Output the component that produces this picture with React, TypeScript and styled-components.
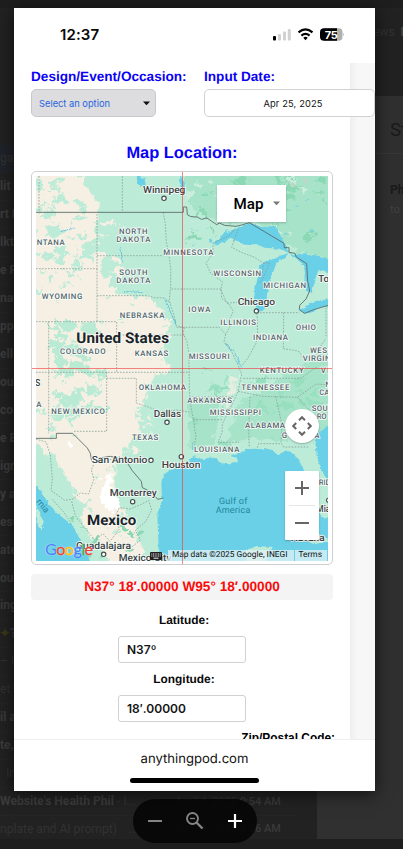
import React from 'react';
import styled, { createGlobalStyle } from 'styled-components';

const GlobalStyle = createGlobalStyle`
  * { box-sizing: border-box; }
  html, body { margin: 0; height: 100%; overflow: hidden; background: #202020; }
`;

const Screen = styled.div`
  position: relative;
  width: 403px;
  height: 849px;
  overflow: hidden;
  background: #202020;
  font-family: 'Liberation Sans', Arial, sans-serif;
`;

/* ---------- dimmed mail client ---------- */
const Mail = styled.div`
  display: grid;
  grid-template-columns: 317px 1fr;
  height: 849px;
  padding: 8px 0 10px;
  background: #1e1e1e;
  font-family: Roboto, sans-serif;
`;
const Rows = styled.div`
  background: #222;
  padding-top: 137px;
  overflow: hidden;
`;
const Row = styled.div<{ $bold?: boolean; $active?: boolean }>`
  display: flex;
  align-items: center;
  justify-content: space-between;
  height: 27.95px;
  width: 297px;
  padding-right: 16px;
  border-bottom: 1px solid #252525;
  background: ${(p) => (p.$active ? '#20232a' : 'transparent')};
  color: ${(p) => (p.$bold ? '#3c3c3c' : '#323232')};
  font-size: 12.1px;
  font-weight: ${(p) => (p.$bold ? 700 : 400)};
  white-space: nowrap;
`;
const Spark = styled.span`color: #3d3719;`;
const Light = styled.span`font-weight: 400; color: #343434;`;
const Stamp = styled.span`font-size: 11px; font-weight: 500; color: #303030;`;
const Late = styled.span`color: #3a3a3a;`;
const Reader = styled.div`
  display: grid;
  grid-template-rows: 88px 58px 1fr;
  background: #303030;
  overflow: hidden;
`;
const Tabs = styled.div`
  background: #222;
  padding: 17px 0 0 56px;
  color: #313131;
  font-size: 12px;
  white-space: nowrap;
  b { color: #444; }
`;
const Subject = styled.div`
  border-bottom: 1px solid #383838;
  padding: 22px 0 0 73px;
  font-size: 19px;
  color: #1a1a1a;
`;
const Sender = styled.div`
  padding: 27px 0 0 73px;
  color: #414141;
  font-size: 11px;
  line-height: 19px;
  b { color: #1b1b1b; font-size: 12px; }
`;

/* ---------- phone picture ---------- */
const Phone = styled.main`
  position: absolute;
  left: 14px;
  top: 8px;
  width: 361px;
  height: 783px;
  display: flex;
  flex-direction: column;
  background: #fff;
  box-shadow: 0 3px 16px rgba(0, 0, 0, 0.65);
`;
const Status = styled.header`
  height: 55px;
  display: flex;
  flex: none;
  justify-content: space-between;
  padding: 18px 30px 0 46px;
`;
const Clock = styled.span`
  font: 600 15px/18px Inter, sans-serif;
  letter-spacing: 0.1px;
  color: #080808;
`;
const Body = styled.section`
  flex: 1;
  min-height: 0;
  overflow: hidden;
  padding: 5px 0 0 17px;
  background: linear-gradient(90deg, #fff 0 336px, #eeeeee 336px, #f7f7f7 343px);
`;
const Fields = styled.div`
  display: grid;
  grid-template-columns: 173px 171px;
`;
const FieldLabel = styled.label`
  display: block;
  height: 21px;
  font-size: 13.6px;
  line-height: 17px;
  font-weight: 700;
  color: #0b02f5;
  white-space: nowrap;
  text-rendering: geometricPrecision;
`;
const SelectBox = styled.div`
  display: flex;
  align-items: center;
  justify-content: space-between;
  width: 125px;
  height: 28px;
  padding: 0 5px 0 7px;
  border: 1px solid #c9c9cb;
  border-radius: 5px;
  background: #dddde0;
  color: #2864dc;
  font: 400 9.3px Inter, sans-serif;
`;
const DateBox = styled.div`
  width: 171px;
  height: 28px;
  padding-left: 7px;
  border: 1px solid #d2d2d2;
  border-radius: 5px;
  background: #fff;
  color: #111;
  font: 400 9.3px/27px Inter, sans-serif;
  letter-spacing: 0.15px;
  text-align: center;
`;
const Center = styled.div`
  width: 302px;
  display: flex;
  flex-direction: column;
  align-items: center;
`;
const Title = styled.h2`
  margin: 26px 0 8px;
  font-size: 16.4px;
  line-height: 20px;
  color: #0b02f5;
  text-rendering: geometricPrecision;
`;
const MapFrame = styled.div`
  position: relative;
  width: 302px;
  height: 394px;
  padding: 4px;
  border: 1px solid #cfcfcf;
  border-radius: 5px;
`;
const MapView = styled.div`
  position: relative;
  width: 292px;
  height: 385px;
  overflow: hidden;
  > svg { display: block; }
`;
const CrossLine = styled.i<{ $vertical?: boolean }>`
  position: absolute;
  background: rgba(240, 60, 60, 0.62);
  ${(p) => (p.$vertical ? 'left: 150px; top: 0; bottom: 0; width: 1px;' : 'top: 196px; left: 0; right: 0; height: 1px;')}
`;
const MapType = styled.div`
  position: absolute;
  left: 181px;
  top: 9px;
  width: 69px;
  height: 37px;
  display: flex;
  align-items: center;
  justify-content: space-between;
  padding: 0 6px 0 16.5px;
  background: #fff;
  box-shadow: 0 1px 2px rgba(0, 0, 0, 0.2);
  font: 500 15.2px Roboto, sans-serif;
  color: #000;
`;
const PanButton = styled.div`
  position: absolute;
  left: 249px;
  top: 233px;
  width: 34px;
  height: 34px;
  border-radius: 50%;
  background: #fff;
  box-shadow: 0 1px 2px rgba(0, 0, 0, 0.25);
  svg { display: block; }
`;
const ZoomStack = styled.div`
  position: absolute;
  left: 249px;
  top: 295px;
  width: 34px;
  height: 69px;
  border-radius: 1px;
  background: #fff;
  box-shadow: 0 1px 2px rgba(0, 0, 0, 0.25);
  svg { display: block; }
`;
const Credits = styled.div`
  position: absolute;
  right: 1px;
  bottom: 0;
  height: 11px;
  display: flex;
  align-items: center;
  font: 400 8.35px/11px Roboto, sans-serif;
  color: #111;
  white-space: nowrap;
  text-rendering: geometricPrecision;
  svg { margin-right: 6px; }
  span { background: rgba(226, 242, 246, 0.76); padding: 0 6px 0 4px; }
  span + span { margin-left: 1px; padding: 0 5px 0 4px; }
`;
const GoogleMark = styled.div`
  position: absolute;
  left: 9px;
  bottom: 2px;
  font: 400 16px/20px Lato, sans-serif;
  letter-spacing: -0.45px;
  -webkit-text-stroke: 0.35px currentColor;
  text-shadow: 0 0 1px #fff, 0 0 1px #fff;
`;
const Tint = styled.span<{ $c: string }>`color: ${(p) => p.$c};`;
const Coordinates = styled.output`
  display: block;
  width: 302px;
  height: 26px;
  margin-top: 9px;
  border-radius: 4px;
  background: #f4f4f4;
  color: #fa0b0b;
  font: 700 13.65px/25px 'Liberation Sans', Arial, sans-serif;
  text-align: center;
  text-rendering: geometricPrecision;
`;
const SmallLabel = styled.label<{ $top: number }>`
  height: 16px;
  margin: ${(p) => p.$top}px 0 8px 4px;
  font-size: 11.9px;
  line-height: 16px;
  font-weight: 700;
  color: #090909;
  text-rendering: geometricPrecision;
`;
const ValueBox = styled.div`
  width: 128px;
  height: 27px;
  padding-left: 8px;
  border: 1px solid #d1d1d1;
  border-radius: 3px;
  font: 600 12px/26px Inter, sans-serif;
  color: #151515;
`;
const ZipLabel = styled.div`
  align-self: flex-end;
  margin: 8px -2px 0 0;
  font-size: 11.9px;
  line-height: 16px;
  font-weight: 700;
`;
const AddressBar = styled.footer`
  flex: none;
  height: 52px;
  border-top: 1px solid #efefef;
  display: flex;
  flex-direction: column;
  align-items: center;
  justify-content: space-between;
  padding: 9px 0 8px;
  font: 400 13.1px/20px Inter, sans-serif;
  color: #111;
  text-rendering: geometricPrecision;
`;
const HomeBar = styled.i`width: 129px; height: 5px; border-radius: 3px; background: #000;`;

const Pill = styled.nav`
  position: absolute;
  left: 133px;
  top: 799px;
  width: 124px;
  height: 44px;
  border-radius: 22px;
  background: rgba(4, 4, 4, 0.88);
  svg { display: block; }
`;

/* ---------- map drawing ---------- */
function scatter(seed: number, count: number, x: number, y: number, w: number, h: number, size: number) {
  let s = seed;
  const next = () => {
    s = (s * 16807) % 2147483647;
    return s / 2147483647;
  };
  let d = '';
  for (let i = 0; i < count; i++) {
    const cx = x + next() * w;
    const cy = y + next() * h;
    const r = size * (0.3 + next());
    const turn = next() * 6;
    for (let k = 0; k < 9; k++) {
      const a = turn + (k / 9) * Math.PI * 2;
      const q = r * (0.4 + next() * 0.9);
      d += `${k ? 'L' : 'M'}${(cx + Math.cos(a) * q * 1.25).toFixed(1)} ${(cy + Math.sin(a) * q * 0.8).toFixed(1)}`;
    }
    d += 'Z';
  }
  return d;
}

type Label = [string, number, number, number];
const states: Label[] = [
  ['NTANA', 50, 239, 84], ['NORTH', 297, 206, 86], ['DAKOTA', 289, 230, 102], ['MINNESOTA', 430, 269, 150],
  ['SOUTH', 298, 328, 85], ['DAKOTA', 289, 352, 102], ['WISCONSIN', 580, 331, 143], ['MICHIGAN', 730, 368, 128],
  ['WYOMING', 65, 400, 122], ['IOWA', 505, 440, 66], ['NEBRASKA', 299, 459, 134], ['ILLINOIS', 601, 478, 107],
  ['OHIO', 827, 493, 61], ['INDIANA', 699, 523, 105], ['COLORADO', 120, 567, 137], ['KANSAS', 344, 573, 101],
  ['MISSOURI', 506, 581, 123], ['WES', 870, 562, 51], ['VIRGIN', 848, 586, 84], ['KENTUCKY', 719, 623, 132],
  ['VI', 902, 623, 26], ['OKLAHOMA', 356, 675, 142], ['TENNESSEE', 664, 675, 144], ['N', 916, 666, 16],
  ['CA', 898, 690, 30], ['ARKANSAS', 502, 712, 134], ['A', 49, 725, 14], ['NEW MEXICO', 94, 747, 161],
  ['MISSISSIPPI', 569, 748, 154], ['SOU', 875, 738, 48], ['RO', 890, 761, 30], ['ALABAMA', 675, 787, 120],
  ['G', 785, 818, 16], ['A', 883, 818, 14], ['TEXAS', 336, 823, 79], ['LOUISIANA', 522, 860, 136],
  ['RID', 896, 960, 36],
];
const cities: Label[] = [
  ['Winnipeg', 369, 85, 127], ['Chicago', 653, 421, 112], ['Dallas', 401, 756, 82], ['San Antonio', 215, 895, 167],
  ['Houston', 425, 910, 116], ['Monterrey', 269, 994, 141], ['Guadalajara', 168, 1152, 165],
  ['Mexico City', 296, 1187, 158], ['Havana', 812, 1128, 102], ['Mia', 889, 1042, 42], ['S', 46, 662, 15], ['To', 895, 352, 32],
];
const rings = [[432, 100], [709, 438], [441, 772], [393, 886], [484, 875], [338, 1010], [251, 1168], [926, 1006]];

const gulf =
  'M418 1200L414 1100L412 1050L426 1002L424 954L432 928L458 911L494 899L520 873L551 883L571 877L588 880L596 894L625 897L640 892L657 892L649 878L628 872L665 861L685 852L705 851L721 853L733 849L755 855L772 867L793 861L809 858L820 868L840 887L848 906L856 930L855 960L862 982L876 1009L891 1039L915 1062L940 1050L940 1200Z';
const pacific = 'M44 958L65 980L86 1017L122 1053L156 1080L177 1117L200 1164L213 1196L44 1196Z';
const atlantic = 'M930 778L894 805L885 826L890 869L901 908L922 945L935 950Z';
const baja = 'M44 1009L56 1040L72 1068L65 1096L53 1082L50 1054L44 1044Z';
const superior =
  'M579 239L612 204L657 188L690 174L727 187L766 182L780 210L800 245L807 263L777 251L734 248L709 237L674 240L654 229L630 219L607 235Z';
const lakeMichigan =
  'M728 293L747 283L759 286L780 272L806 264L791 281L777 284L767 303L756 325L747 352L741 389L737 429L720 442L708 431L701 407L705 373L713 338L727 316L716 305Z';
const huron =
  'M807 263L829 270L852 264L881 270L908 276L932 285L932 327L908 315L890 322L884 355L873 385L858 377L853 350L855 319L846 293L827 282Z';
const erie = 'M837 435L862 423L882 408L930 402L930 424L902 427L872 443L852 446Z';

const dotted = [
  'M57 33V142M307 33V140M48 311H231V142M231 272H443M231 392H382L402 398L433 399L451 414',
  'M430 142L436 177L439 230L447 271L452 310V372H603M451 374L448 408L461 448L469 482L493 488L489 505L501 530L506 560L509 695',
  'M231 311V470M48 470H290V622M290 510H494M86 470V805M48 622H509M260 622V799L160 799M260 640H349V714L390 728L425 741L471 735L508 741',
  'M470 487H598L617 508L632 481L629 462L640 439L626 416L605 400L603 374L607 350L572 325L558 294L579 265V234L630 211L645 190M654 193L635 247L666 263L702 276L730 294L725 340',
  'M617 508L612 531L636 562L654 600L665 627L654 680L629 733L607 776L606 803L594 832H657M508 695H640M520 764H608M508 695L519 760L528 815L522 848',
  'M711 445L713 508L708 535L683 580L664 604M711 443H838M791 443L790 551L835 558L852 582L890 570L905 538L918 520M918 428V518M670 640H842L892 605M655 679L726 694L832 697L888 657L930 660',
  'M690 695L686 789L688 848M767 694L786 779L783 832L791 846L867 846M712 848L716 836H780M832 697L866 733L893 763M730 294L749 294L729 343L713 356',
  'M603 374L621 415L651 412M48 822L78 831L91 870L97 941L93 976L134 1006L159 1002L181 984L206 987L222 942L214 915L225 888L245 884L264 886L303 874',
  'M155 1009L166 1052L198 1093L224 1126L249 1106L270 1129L299 1091L281 1064L298 1028L331 1032L366 1017L386 1006L395 1035L377 1070L346 1096L361 1125L331 1150M97 1003L130 1040L154 1075',
];
const borders =
  'M48 142H490V126H500L502 149L513 155L532 156L544 163L561 159L574 168L590 179L598 174L614 181L648 184L665 180L688 173L792 235L793 248L807 248L807 262L825 265L829 276L860 296L863 348L869 378L858 402L839 421L838 434L854 445L881 434L928 420M48 820H109V805H158L202 849L211 865L215 888L239 879L271 874L316 884L336 916L364 949L367 968L396 982L413 1003L430 999';

const MapArt = () => (
  <svg width="292" height="385" viewBox="48 33 876 1155" textRendering="geometricPrecision">
    <defs>
      <filter id="rough" x="-5%" y="-5%" width="110%" height="110%" colorInterpolationFilters="sRGB">
        <feTurbulence type="fractalNoise" baseFrequency="0.045" numOctaves="3" seed="8" />
        <feDisplacementMap in="SourceGraphic" scale="42" xChannelSelector="R" yChannelSelector="G" />
      </filter>
      <filter id="coast" colorInterpolationFilters="sRGB">
        <feTurbulence type="fractalNoise" baseFrequency="0.08" numOctaves="2" seed="4" />
        <feDisplacementMap in="SourceGraphic" scale="12" xChannelSelector="R" yChannelSelector="G" />
      </filter>
    </defs>
    <rect x="48" y="33" width="876" height="1155" fill="#bcebd7" />
    <g filter="url(#rough)">
      <path fill="#a6e3c8" d="M500 0H960V290L835 260L780 225L680 165L600 175L500 115ZM650 720L760 650L850 600L950 540V790L850 805L790 830L690 820L620 840ZM500 710L600 690L580 850L510 850Z" />
      <path fill="#8bd9b4" d={scatter(91, 30, 520, 40, 400, 180, 17)} />
      <path fill="#98dfbf" d={scatter(51, 28, 520, 610, 380, 230, 16)} />
      <path fill="#cceedd" d={scatter(17, 25, 510, 40, 400, 200, 12)} />
      <path fill="#f5f0e3" d="M0 0H170L205 80L240 120L230 150L220 240L250 330L290 385L390 400L445 460L450 500L430 560L455 620L405 625L370 700L350 750L365 800L310 850L280 950L300 1040L250 1080L230 1000L180 1010L140 940L100 870L0 815Z" />
      <path fill="#f5f0e3" d="M220 985L300 1020L340 1090L400 1220H290L220 1120L180 1060Z" />
      <path fill="#bcebd7" d={scatter(35, 52, 40, 40, 190, 270, 15)} />
      <path fill="#bcebd7" d={scatter(77, 14, 48, 315, 150, 130, 9)} />
      <path fill="#b9ead4" d={scatter(61, 65, 105, 465, 145, 290, 15)} />
      <path fill="#bcebd7" d={scatter(23, 14, 45, 735, 130, 80, 11)} />
      <path fill="#f5f0e3" d={scatter(49, 20, 235, 165, 85, 240, 13)} />
      <path fill="#bcebd7" d={scatter(29, 25, 260, 350, 180, 250, 6)} />
      <path fill="#bcebd7" d={scatter(19, 32, 210, 895, 180, 280, 9)} />
      <path fill="#f5f0e3" d={scatter(44, 25, 310, 665, 95, 220, 9)} />
      <path fill="#fff" d="M255 925L275 930L273 975L290 990L308 1010L285 1038L252 1028L240 1000ZM144 815L165 850L142 845Z" />
      <path fill="#e6efdf" d="M638 630L655 632L641 675L620 730L608 735L620 690Z" />
      <path fill="#8bd9b4" d={scatter(83, 16, 155, 1050, 240, 130, 9)} />
      <path fill="#c3d6c8" d={scatter(88, 7, 765, 35, 100, 55, 8)} />
    </g>
    <g filter="url(#coast)" fill="#6ad0e7">
      <path d={gulf} />
      <path d={pacific} />
      <path d={atlantic} />
      <path d={superior} />
      <path d={lakeMichigan} />
      <path d={huron} />
      <path d={erie} />
      <path d="M350 35L373 38L378 63L355 62ZM481 33L495 55L490 84L480 60Z" />
      <path d={scatter(31, 22, 490, 70, 400, 190, 4)} />
      <path fill="#bcebd7" d={baja} />
      <path fill="#bcebd7" d="M678 1155L710 1143L755 1145L738 1190H680ZM808 1115L840 1097L905 1108L928 1126L885 1138Z" />
    </g>
    <g fill="none" stroke="#4cbbe1" strokeWidth="2.3" filter="url(#coast)">
      <path d="M122 200L142 195L153 188L163 190M435 402L449 435L468 480M620 535L650 575L665 610M518 852L520 832M315 380L365 382M308 290L302 246" />
    </g>
    {dotted.map((d) => (
      <path key={d} d={d} fill="none" stroke="#829b94" strokeWidth="2.2" strokeDasharray="5 4" />
    ))}
    <path d={borders} fill="none" stroke="#5a6868" strokeWidth="2.6" strokeLinejoin="round" />
    {rings.map(([x, y]) => (
      <circle key={`${x}-${y}`} cx={x} cy={y} r="6.5" fill="#fff" stroke="#454b4d" strokeWidth="3.5" />
    ))}
    <g fontFamily="Roboto, sans-serif" paintOrder="stroke" stroke="#f5fcf8" strokeLinejoin="round">
      {states.map(([text, x, y, w], i) => (
        <text key={i} x={x} y={y + 1} fontSize="23.5" fontWeight="500" textLength={w} strokeWidth="5" fill="#56636a">{text}</text>
      ))}
      {cities.map(([text, x, y, w], i) => (
        <text key={i} x={x} y={y} fontSize="29.5" fontWeight="500" textLength={w} lengthAdjust="spacingAndGlyphs" strokeWidth="5" fill="#3b4144">{text}</text>
      ))}
      <text x="169" y="534" fontSize="44.5" fontWeight="700" textLength="278" lengthAdjust="spacingAndGlyphs" strokeWidth="5" fill="#1d2225">United States</text>
      <text x="201" y="1081" fontSize="43" fontWeight="700" textLength="148" lengthAdjust="spacingAndGlyphs" strokeWidth="5" fill="#1d2225">Mexico</text>
    </g>
    <g fontFamily="Roboto, sans-serif" fontSize="27" fill="#24879d">
      <text x="597" y="1017" textLength="85">Gulf of</text>
      <text x="587" y="1044" textLength="104">America</text>
      <text x="47" y="1011" transform="rotate(49 47 1011)">rnia</text>
    </g>
  </svg>
);

const Caret = ({ color }: { color: string }) => (
  <svg width="7" height="5" viewBox="0 0 7 5"><path d="M0 .5h7L3.5 4.3z" fill={color} /></svg>
);

const StatusIcons = () => (
  <svg width="74" height="18" viewBox="0 0 74 18">
    <rect x="2" y="10" width="3" height="4.5" rx=".9" fill="#000" />
    <g fill="#d1d1d1">
      <rect x="7" y="8" width="3" height="6.5" rx=".9" />
      <rect x="12" y="5.5" width="3" height="9" rx=".9" />
      <rect x="16.8" y="3" width="3" height="11.5" rx=".9" />
    </g>
    <g fill="none" stroke="#000" strokeWidth="2.2">
      <path d="M27.5 6.4Q34.5.5 41.5 6.4" />
      <path d="M30.4 9.6Q34.5 6 38.6 9.6" />
    </g>
    <path d="M32.3 11.7Q34.5 9.8 36.7 11.7L34.5 14.2Z" fill="#000" />
    <path d="M53 2.2h14.5a4 4 0 0 1 4 4v4.6a4 4 0 0 1-4 4H53z" fill="#b0b0b0" />
    <path d="M53 2.2h13v12.6H53a4 4 0 0 1-4-4V6.2a4 4 0 0 1 4-4z" fill="#000" />
    <path d="M72.2 6.7q1.8 1.8 0 3.6z" fill="#b0b0b0" />
    <text x="53.7" y="12.6" fontFamily="Inter, sans-serif" fontSize="11" fontWeight="700" fill="#fff" textLength="13">75</text>
  </svg>
);

const rows: { text: string; bold?: boolean }[] = [
  { text: 'gan' }, { text: 'lit o', bold: true }, { text: 'rt I', bold: true }, { text: 'lkt', bold: true },
  { text: 'e R', bold: true }, { text: 'nat', bold: true }, { text: 'pp', bold: true }, { text: 'ell T', bold: true },
  { text: 'ou', bold: true }, { text: 'co', bold: true }, { text: 'e E', bold: true }, { text: 'ign', bold: true },
  { text: 'y a', bold: true }, { text: 'esu', bold: true }, { text: 'ate', bold: true }, { text: 'ou', bold: true },
  { text: 'ing', bold: true }, { text: '?', bold: true }, { text: '– G' }, { text: 'et' }, { text: 'il a', bold: true },
  { text: 'te,', bold: true }, { text: '\u00a0 In' },
];

export default function App() {
  return (
    <Screen>
      <GlobalStyle />
      <Mail>
        <Rows>
          {rows.map((r, i) => (
            <Row key={i} $bold={r.bold} $active={i === 0}>
              <span>{r.text === '?' && <Spark>✦</Spark>}{r.text}</span>
            </Row>
          ))}
          <Row $bold>
            <span>Website's Health Phil <Light>- I...</Light></span>
            <Stamp>April 4, 2025 <Late>9:54 AM</Late></Stamp>
          </Row>
          <Row>
            <span>nplate and AI prompt) &nbsp; &nbsp;...</span>
            <Stamp>April 4, 2025 <Late>9:06 AM</Late></Stamp>
          </Row>
        </Rows>
        <Reader>
          <Tabs>ews &nbsp;<b>M</b></Tabs>
          <Subject>St</Subject>
          <Sender><b>Ph</b><br />to s</Sender>
        </Reader>
      </Mail>

      <Phone>
        <Status>
          <Clock>12:37</Clock>
          <StatusIcons />
        </Status>
        <Body>
          <Fields>
            <div>
              <FieldLabel>Design/Event/Occasion:</FieldLabel>
              <SelectBox>Select an option <Caret color="#111" /></SelectBox>
            </div>
            <div>
              <FieldLabel>Input Date:</FieldLabel>
              <DateBox>Apr 25, 2025</DateBox>
            </div>
          </Fields>
          <Center>
            <Title>Map Location:</Title>
            <MapFrame>
              <MapView>
                <MapArt />
                <MapType>Map <Caret color="#777" /></MapType>
                <PanButton>
                  <svg width="34" height="34" viewBox="0 0 34 34" fill="none" stroke="#666" strokeWidth="2">
                    <path d="M14 11.2l3-3 3 3M14 22.8l3 3 3-3M11.2 14l-3 3 3 3M22.8 14l3 3-3 3" />
                  </svg>
                </PanButton>
                <ZoomStack>
                  <svg width="34" height="69" viewBox="0 0 34 69" fill="none" stroke="#666" strokeWidth="2">
                    <path d="M10 17h14M17 10v14M10 52h14" />
                    <path d="M4 34.5h26" stroke="#e6e6e6" strokeWidth="1" />
                  </svg>
                </ZoomStack>
                <GoogleMark>
                  <Tint $c="#4285f4">G</Tint><Tint $c="#ea4335">o</Tint><Tint $c="#fbbc05">o</Tint>
                  <Tint $c="#4285f4">g</Tint><Tint $c="#34a853">l</Tint><Tint $c="#ea4335">e</Tint>
                </GoogleMark>
                <Credits>
                  <svg width="12" height="8" viewBox="0 0 12 8">
                    <rect width="12" height="8" rx="1" fill="#222" />
                    <path d="M1.3 2h9.4M1.3 4h9.4" stroke="#eee" strokeDasharray="1 .7" />
                    <path d="M3.5 6.2h5" stroke="#eee" />
                  </svg>
                  <span>Map data ©2025 Google, INEGI</span>
                  <span>Terms</span>
                </Credits>
              </MapView>
              <CrossLine $vertical />
              <CrossLine />
            </MapFrame>
            <Coordinates>N37° 18′.00000 W95° 18′.00000</Coordinates>
            <SmallLabel $top={12}>Latitude:</SmallLabel>
            <ValueBox>N37º</ValueBox>
            <SmallLabel $top={8}>Longitude:</SmallLabel>
            <ValueBox>18′.00000</ValueBox>
            <ZipLabel>Zip/Postal Code:</ZipLabel>
          </Center>
        </Body>
        <AddressBar>
          anythingpod.com
          <HomeBar />
        </AddressBar>
      </Phone>

      <Pill>
        <svg width="124" height="44" viewBox="0 0 124 44" fill="none">
          <path d="M15 22h14" stroke="#858585" strokeWidth="2" />
          <circle cx="59.5" cy="19.5" r="5.5" stroke="#858585" strokeWidth="1.9" />
          <path d="M63.5 23.5l6 6" stroke="#858585" strokeWidth="2.4" />
          <path d="M57 19.5h5" stroke="#858585" strokeWidth="1.3" />
          <path d="M95 22h14M102 15v14" stroke="#fff" strokeWidth="2.2" />
        </svg>
      </Pill>
    </Screen>
  );
}
